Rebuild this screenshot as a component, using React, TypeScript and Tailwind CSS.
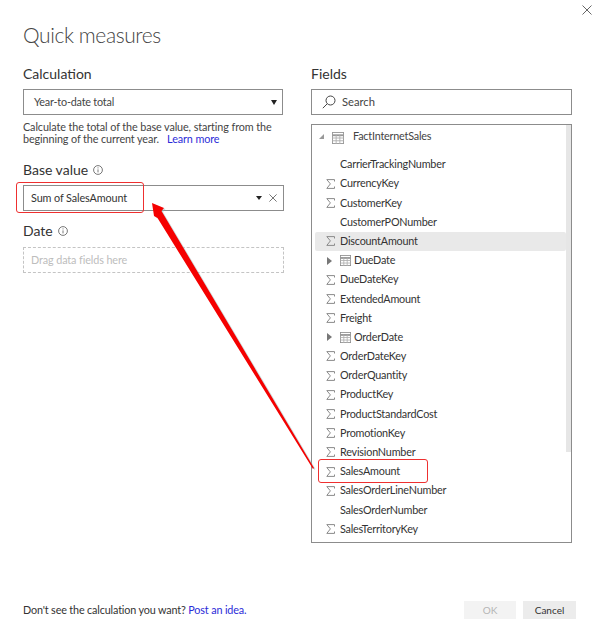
import React from "react";

type Field = { name: string; kind: "none" | "sum" | "date" };
const fields: Field[] = [
  { name: "CarrierTrackingNumber", kind: "none" },
  { name: "CurrencyKey", kind: "sum" },
  { name: "CustomerKey", kind: "sum" },
  { name: "CustomerPONumber", kind: "none" },
  { name: "DiscountAmount", kind: "sum" },
  { name: "DueDate", kind: "date" },
  { name: "DueDateKey", kind: "sum" },
  { name: "ExtendedAmount", kind: "sum" },
  { name: "Freight", kind: "sum" },
  { name: "OrderDate", kind: "date" },
  { name: "OrderDateKey", kind: "sum" },
  { name: "OrderQuantity", kind: "sum" },
  { name: "ProductKey", kind: "sum" },
  { name: "ProductStandardCost", kind: "sum" },
  { name: "PromotionKey", kind: "sum" },
  { name: "RevisionNumber", kind: "sum" },
  { name: "SalesAmount", kind: "sum" },
  { name: "SalesOrderLineNumber", kind: "sum" },
  { name: "SalesOrderNumber", kind: "none" },
  { name: "SalesTerritoryKey", kind: "sum" },
];

function Sigma() {
  return (
    <svg width="9" height="10" viewBox="0 0 9 10" fill="none" stroke="#8a8a8a" strokeWidth="1">
      <path d="M8.5 2.5V.6H.8l3.6 4.3L.8 9.4h7.7V7.5" />
    </svg>
  );
}

function Grid({ size = 13, color = "#8f8f8f" }: { size?: number; color?: string }) {
  return (
    <svg width={size} height={size} viewBox="0 0 13 13" fill="none" stroke={color} strokeWidth="1">
      <rect x="0.5" y="0.5" width="12" height="12" fill="#fff" />
      <path d="M0.5 3.5h12" strokeWidth="2" />
      <path d="M0.5 6.5h12M0.5 9.5h12M4.5 3v10M8.5 3v10" stroke="#b0b0b0" />
    </svg>
  );
}

function Info() {
  return (
    <svg width="10" height="10" viewBox="0 0 10 10" fill="none" stroke="#555" strokeWidth="0.8">
      <circle cx="5" cy="5" r="4.4" />
      <path d="M5 4.4v3M5 2.4v1" />
    </svg>
  );
}

function Cross({ size = 10, color = "#666" }: { size?: number; color?: string }) {
  return (
    <svg width={size} height={size} viewBox="0 0 10 10" fill="none" stroke={color} strokeWidth={10 / size}>
      <path d="M0.5 0.5l9 9M9.5 0.5l-9 9" />
    </svg>
  );
}

function FieldRow({ field, hover }: { field: Field; hover: boolean }) {
  return (
    <div className={`h-[19.2px] flex items-center rounded-[2px] pl-[11px] ${hover ? "bg-[#e9e9e9]" : ""}`}>
      <div className="w-[14px] flex items-center">
        {field.kind === "sum" && <Sigma />}
        {field.kind === "date" && (
          <div className="ml-[1px] w-0 h-0 border-y-[4px] border-y-transparent border-l-[5px] border-l-[#777]" />
        )}
      </div>
      {field.kind === "date" && (
        <div className="w-[14px] flex items-center">
          <Grid size={11} />
        </div>
      )}
      <span className="text-[#333] text-[10.8px] tracking-[-0.2px] leading-none">{field.name}</span>
    </div>
  );
}

export default function App() {
  return (
    <div
      className="relative w-[600px] h-[644px] bg-white overflow-hidden text-[#333]"
      style={{ fontFamily: 'Lato, "Noto Sans", sans-serif' }}
    >
      <div className="absolute top-[5px] right-[8px]">
        <Cross size={10} color="#666" />
      </div>

      <div className="flex flex-col h-full pl-[23px] pr-[24px]">
        <h1 className="mt-[21px] h-[28px] text-[21px] tracking-[-0.4px] leading-[28px] font-light text-[#444]">
          Quick measures
        </h1>

        <div className="flex mt-[16px]">
          {/* Left column */}
          <div className="w-[261px] flex flex-col">
            <div className="h-[18px] text-[14px] leading-[18px] text-[#333]">Calculation</div>
            <div className="mt-[6px] h-[26px] w-[260px] border border-[#8c8c8c] flex items-center justify-between pl-[10px] pr-[5px]">
              <span className="text-[10.8px] tracking-[-0.2px] text-[#444]">Year-to-date total</span>
              <div className="w-0 h-0 border-x-[3px] border-x-transparent border-t-[5px] border-t-[#222]" />
            </div>
            <p className="mt-[6px] text-[10.8px] tracking-[-0.1px] leading-[12.4px] text-[#444] whitespace-nowrap">
              Calculate the total of the base value, starting from the
              <br />
              beginning of the current year.
              <span className="ml-[8px] text-[#2b2bd8]">Learn more</span>
            </p>

            <div className="mt-[15px] h-[18px] flex items-center gap-[5px] text-[14px] leading-[18px]">
              Base value <Info />
            </div>
            <div className="mt-[6px] h-[26px] w-[261px] border border-[#8c8c8c] flex items-center justify-between pl-[7px] pr-[6px]">
              <span className="text-[10.8px] tracking-[-0.1px] text-[#333]">Sum of SalesAmount</span>
              <div className="flex items-center gap-[7px]">
                <div className="w-0 h-0 border-x-[3.5px] border-x-transparent border-t-[4px] border-t-[#222]" />
                <Cross size={8} color="#777" />
              </div>
            </div>

            <div className="mt-[11px] h-[18px] flex items-center gap-[5px] text-[14px] leading-[18px]">
              Date <Info />
            </div>
            <div className="mt-[7px] h-[26px] w-[261px] border border-dashed border-[#c4c4c4] flex items-center pl-[7px]">
              <span className="text-[10.8px] tracking-[-0.1px] text-[#bdbdbd]">Drag data fields here</span>
            </div>
          </div>

          {/* Right column */}
          <div className="ml-[27px] w-[261px] flex flex-col">
            <div className="h-[18px] text-[14px] leading-[18px] text-[#333]">Fields</div>
            <div className="mt-[6px] h-[26px] border border-[#8c8c8c] flex items-center pl-[10px] gap-[6px]">
              <svg width="14" height="14" viewBox="0 0 14 14" fill="none" stroke="#444" strokeWidth="1">
                <circle cx="8.5" cy="5.5" r="4.5" />
                <path d="M5.2 8.8L0.8 13.2" />
              </svg>
              <span className="text-[11.2px] text-[#444]">Search</span>
            </div>
            <div className="relative mt-[9px] h-[419px] border border-[#8c8c8c] overflow-hidden pl-[3px] pr-[5px]">
              <div className="absolute top-0 right-0 w-[5px] h-[327px] bg-[#e6e6e6]" />
              <div className="h-[21px] mt-[1px] flex items-center">
                <div className="w-[11px] ml-[1px] flex justify-center">
                  <div className="w-0 h-0 border-b-[5px] border-b-[#999] border-l-[5px] border-l-transparent" />
                </div>
                <div className="ml-[5px] mt-[3px]">
                  <Grid size={12} color="#999" />
                </div>
                <span className="ml-[9px] text-[10.8px] tracking-[-0.2px] text-[#444]">FactInternetSales</span>
              </div>
              <div className="mt-[8px] flex flex-col">
                {fields.map((f) => (
                  <FieldRow key={f.name} field={f} hover={f.name === "DiscountAmount"} />
                ))}
              </div>
            </div>
          </div>
        </div>

        <div className="flex items-center justify-between mt-[58px] h-[18px]">
          <span className="text-[10.8px] tracking-[-0.15px] text-[#333]">
            Don't see the calculation you want? <span className="text-[#2b2bd8]">Post an idea.</span>
          </span>
          <div className="flex gap-[7px]">
            <div className="w-[52px] h-[18px] bg-[#f3f3f3] text-[#b5b5b5] text-[10px] flex items-center justify-center">OK</div>
            <div className="w-[53px] h-[18px] bg-[#ececec] text-[#333] text-[10px] flex items-center justify-center">Cancel</div>
          </div>
        </div>
      </div>

      {/* Annotations */}
      <div className="absolute left-[16px] top-[182px] w-[128px] h-[31px] border border-[#ee3030] rounded-[3px]" />
      <div className="absolute left-[318px] top-[459px] w-[110px] h-[24px] border border-[#ee3030] rounded-[3px]" />
      <svg className="absolute left-0 top-0 pointer-events-none" width="600" height="644" viewBox="0 0 600 644">
        <polygon points="152,203 164,208 161.5,211 314,468 313,469 157.5,218 154,216" fill="#8fb5b5" opacity="0.45" transform="translate(1.5,1)" />
        <polygon points="152,203 164,208 161.5,211 314,468 313,469 157.5,218 154,216" fill="#f50000" />
      </svg>
    </div>
  );
}
